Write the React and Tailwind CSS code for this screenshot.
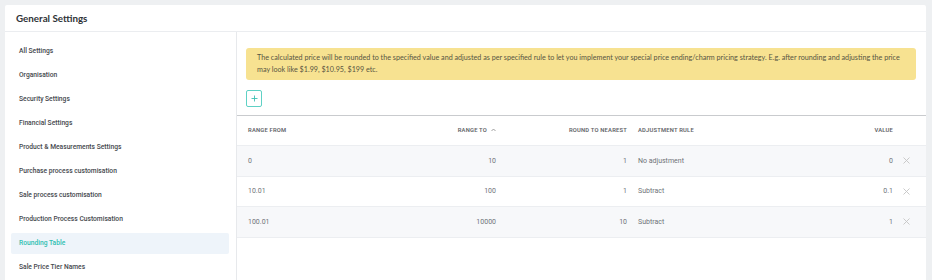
import React from 'react';

const menu = [
    'All Settings',
    'Organisation',
    'Security Settings',
    'Financial Settings',
    'Product & Measurements Settings',
    'Purchase process customisation',
    'Sale process customisation',
    'Production Process Customisation',
    'Rounding Table',
    'Sale Price Tier Names',
];

const rows = [
    { from: '0', to: '10', nearest: '1', rule: 'No adjustment', value: '0' },
    { from: '10.01', to: '100', nearest: '1', rule: 'Subtract', value: '0.1' },
    { from: '100.01', to: '10000', nearest: '10', rule: 'Subtract', value: '1' },
];

const cols = 'grid grid-cols-[150px_119px_131px_1fr_98px_28px] items-center';

function CloseIcon() {
    return (
        <svg width="7" height="7" viewBox="0 0 7 7" className="block">
            <path d="M0.5 0.5L6.5 6.5M6.5 0.5L0.5 6.5" stroke="#c4c4c4" strokeWidth="0.9" />
        </svg>
    );
}

function SortUp() {
    return (
        <svg width="5" height="4" viewBox="0 0 5 4" className="inline-block ml-[4px] mb-[2px]">
            <path d="M0.5 3L2.5 1L4.5 3" fill="none" stroke="#888" strokeWidth="0.8" />
        </svg>
    );
}

export default function App() {
    return (
        <div className="w-[932px] h-[280px] overflow-hidden bg-[#eef0f2] pt-[5px] pl-[5px] pr-[6px] font-['Roboto',sans-serif]">
            <div className="bg-white h-[290px] flex flex-col rounded-t-[2px]">
                <header className="h-[27px] border-b border-[#ebedf0] flex items-center pl-[11px]">
                    <h1 className="text-[9.8px] font-bold text-[#2f3337] font-['Lato',sans-serif]">General Settings</h1>
                </header>

                <div className="flex flex-1">
                    <aside className="w-[232px] border-r border-[#e7e9ec] pt-[9px] pl-[6px] pr-[7px] flex flex-col gap-[3px]">
                        {menu.map((item) => {
                            const active = item === 'Rounding Table';
                            return (
                                <div
                                    key={item}
                                    className={
                                        'h-[21px] flex items-center pl-[8px] rounded-[2px] text-[6.7px] font-medium ' +
                                        (active ? 'bg-[#eef4fa] text-[#2fbfb1]' : 'text-[#45484d]')
                                    }
                                >
                                    {item}
                                </div>
                            );
                        })}
                    </aside>

                    <main className="flex-1 flex flex-col">
                        <div className="pt-[16px] pl-[9px] pr-[10px]">
                            <div className="bg-[#f7e291] rounded-[3px] pl-[11px] pr-[6px] py-[4px] text-[7.2px] leading-[12px] text-[#585643] font-['Lato',sans-serif]">
                                The calculated price will be rounded to the specified value and adjusted as per specified rule to let you implement your special price ending/charm pricing strategy. E.g. after rounding and adjusting the price may look like $1.99, $10.95, $199 etc.
                            </div>
                            <button className="mt-[10px] w-[16px] h-[17px] border border-[#5fd1c5] rounded-[2px] flex items-center justify-center">
                                <svg width="7" height="7" viewBox="0 0 7 7">
                                    <path d="M3.5 0.5V6.5M0.5 3.5H6.5" stroke="#3cc0b2" strokeWidth="0.9" />
                                </svg>
                            </button>
                        </div>

                        <div className="mt-[8px] border-t border-[#c9cbce]">
                            <div className={cols + ' h-[30px] border-b border-[#eceef1] text-[5.8px] font-semibold uppercase tracking-[0.2px] text-[#5f6368]'}>
                                <div className="pl-[11px]">Range From</div>
                                <div className="text-right pr-[10px]">Range To<SortUp /></div>
                                <div className="text-right pr-[10px]">Round to nearest</div>
                                <div className="pl-[1px]">Adjustment rule</div>
                                <div className="text-right pr-[5px]">Value</div>
                                <div />
                            </div>
                            {rows.map((r, i) => (
                                <div
                                    key={r.from}
                                    className={
                                        cols +
                                        ' h-[30.5px] border-b border-[#eceef1] text-[7px] text-[#6f7378] ' +
                                        (i % 2 === 0 ? 'bg-[#f7f8fa]' : 'bg-white')
                                    }
                                >
                                    <div className="pl-[11px]">{r.from}</div>
                                    <div className="text-right pr-[10px]">{r.to}</div>
                                    <div className="text-right pr-[10px]">{r.nearest}</div>
                                    <div className="pl-[1px]">{r.rule}</div>
                                    <div className="text-right pr-[5px]">{r.value}</div>
                                    <div className="pl-[5px]"><CloseIcon /></div>
                                </div>
                            ))}
                        </div>
                    </main>
                </div>
            </div>
        </div>
    );
}
